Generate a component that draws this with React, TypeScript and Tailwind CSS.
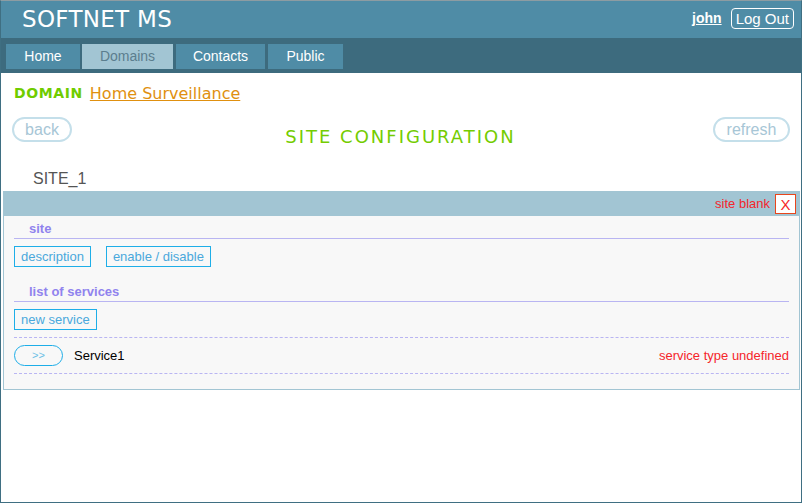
import React from "react";

const sans = { fontFamily: '"Liberation Sans", Arial, sans-serif' };
const dv = { fontFamily: '"DejaVu Sans", Verdana, sans-serif' };

export default function App() {
  return (
    <div
      className="w-[802px] h-[503px] border border-[#3f6f82] border-t-[#8d9ca2] bg-white flex flex-col"
      style={sans}
    >
      {/* header */}
      <div className="h-[37px] bg-[#4f8ca6] flex items-center justify-between pl-[21px] pr-[7px]">
        <div className="text-white text-[23px] leading-none tracking-[0.3px]" style={dv}>
          SOFTNET MS
        </div>
        <div className="flex items-center gap-[9px] -mt-[2px]">
          <span className="text-white font-bold underline text-[14px]">john</span>
          <span className="text-white border border-white rounded-[4px] px-[4px] h-[21px] flex items-center text-[15px] leading-none">
            Log Out
          </span>
        </div>
      </div>
      {/* nav */}
      <div className="h-[35px] bg-[#3d6b7e] flex items-start pt-[6px] pl-[5px] gap-[2px]">
        <div className="h-[25px] w-[74px] bg-[#4f8ca6] text-white text-[14px] flex items-center justify-center">Home</div>
        <div className="h-[25px] w-[91px] bg-[#a2c5d3] text-[#5b7e8e] text-[14px] flex items-center justify-center">Domains</div>
        <div className="h-[25px] w-[89px] bg-[#4f8ca6] text-white text-[14px] flex items-center justify-center ml-[1px]">Contacts</div>
        <div className="h-[25px] w-[75px] bg-[#4f8ca6] text-white text-[14px] flex items-center justify-center ml-[1px]">Public</div>
      </div>
      {/* content */}
      <div className="flex-1 flex flex-col">
        <div className="flex items-center pl-[13px] pt-[10px] h-[31px] gap-[7px]">
          <span className="text-[#6fcc00] font-bold text-[14px] tracking-[0.6px]" style={dv}>DOMAIN</span>
          <span className="text-[#e0900f] underline text-[16px]" style={dv}>Home Surveillance</span>
        </div>
        <div className="flex items-center justify-between px-[11px] mt-[13px] h-[25px]">
          <span className="w-[60px] h-[25px] border-2 border-[#c4dfea] rounded-full text-[#a7c6d6] text-[16px] flex items-center justify-center">back</span>
          <span className="text-[#74cc00] text-[18px] tracking-[2px] mt-[14px] ml-[16px]" style={dv}>SITE CONFIGURATION</span>
          <span className="w-[77px] h-[25px] border-2 border-[#c4dfea] rounded-full text-[#a7c6d6] text-[16px] flex items-center justify-center">refresh</span>
        </div>
        <div className="pl-[32px] mt-[29px] text-[16px] text-[#555] leading-none h-[19px]">SITE_1</div>
        {/* panel */}
        <div className="mx-[2px] border border-[#a2c5d3] bg-[#f8f8f8] flex flex-col w-[797px] mt-[1px]">
          <div className="h-[24px] bg-[#a2c5d3] flex items-center justify-end pr-[3px] gap-[5px]">
            <span className="text-[#f5262b] text-[13px]">site blank</span>
            <span className="w-[21px] h-[20px] bg-white border border-[#e8461c] text-[#f5262b] text-[15px] flex items-center justify-center leading-none">X</span>
          </div>
          <div className="px-[10px] flex flex-col">
            <div className="h-[23px] pl-[15px] flex items-end pb-[0px] border-b border-[#b9b5f2] text-[#9083ee] font-bold text-[13px]">site</div>
            <div className="flex gap-[15px] mt-[7px]">
              <span className="h-[21px] px-[6px] border border-[#1eaee8] text-[#4aa8dc] text-[13px] flex items-center">description</span>
              <span className="h-[21px] px-[6px] border border-[#1eaee8] text-[#4aa8dc] text-[13px] flex items-center">enable / disable</span>
            </div>
            <div className="h-[35px] pl-[15px] flex items-end pb-[0px] border-b border-[#b9b5f2] text-[#9083ee] font-bold text-[13px]">list of services</div>
            <div className="flex mt-[7px]">
              <span className="h-[21px] px-[6px] border border-[#1eaee8] text-[#4aa8dc] text-[13px] flex items-center">new service</span>
            </div>
            <div className="mt-[7px] border-t border-dashed border-[#b9b5f2]" />
            <div className="h-[35px] flex items-center">
              <span className="w-[49px] h-[21px] border border-[#1eaee8] rounded-full text-[#6cbfe6] text-[11px] flex items-center justify-center">&gt;&gt;</span>
              <span className="ml-[11px] text-[13px] text-black">Service1</span>
              <span className="ml-auto text-[13px] text-[#f5262b]">service type undefined</span>
            </div>
            <div className="border-t border-dashed border-[#b9b5f2]" />
            <div className="h-[15px]" />
          </div>
        </div>
      </div>
    </div>
  );
}
